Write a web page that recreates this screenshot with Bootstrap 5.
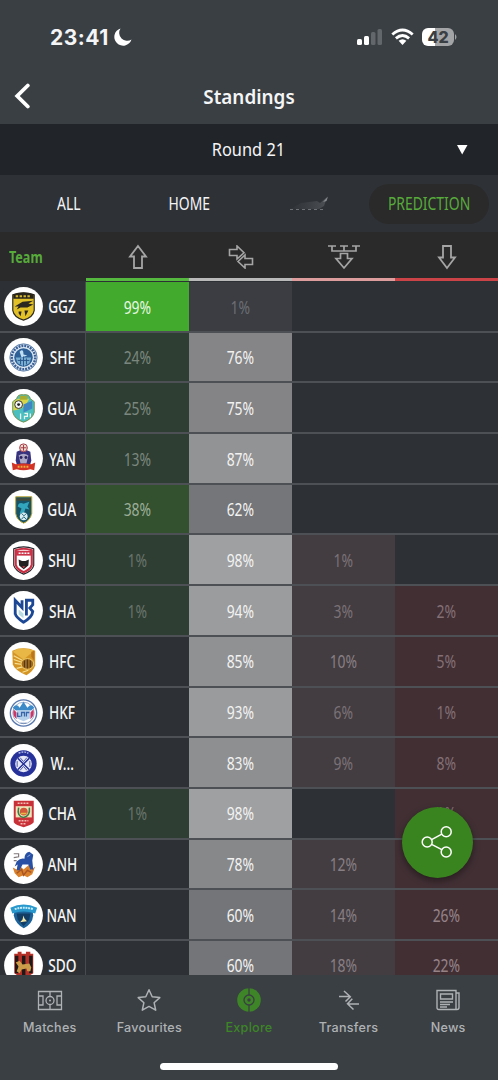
<!DOCTYPE html>
<html lang="en">
<head>
    <meta charset="UTF-8">
    <meta name="viewport" content="width=device-width, initial-scale=1.0">
    <link href="https://cdn.jsdelivr.net/npm/bootstrap@5.3.3/dist/css/bootstrap.min.css" rel="stylesheet" />
    <script defer src="https://cdn.jsdelivr.net/npm/bootstrap@5.3.3/dist/js/bootstrap.bundle.min.js"></script>
    <title>Standings</title>
    <style>
      body {
        height: 1080px;
        background: #3a3f43;
        color: #f4f5f6;
        font-family: "Noto Sans", "Open Sans", sans-serif;
        font-size: 17.6px;
        line-height: 1;
      }
      svg { display: block; flex: none; }
      /* condensed lettering */
      .cond { display: inline-block; transform: scaleX(.79); white-space: nowrap; }

      .status-bar { height: 74px; padding: 0 41px 0 50px; font-family: Inter, sans-serif; }
      .clock { font-size: 21px; font-weight: 750; letter-spacing: .5px; }
      .battery { width: 32px; height: 18px; border-radius: 6px; color: #3a3f43; font-size: 16px; font-weight: 800;
                 background: linear-gradient(90deg, #fff 42%, #a2a4a6 42%); }
      .title-bar { height: 50px; padding-bottom: 6px; }
      .title-bar h1 { font-size: 20.5px; font-weight: 600; transform: scaleX(.92); }
      .round-bar { height: 51px; background: #212429; }
      .round-bar .cond { transform: scaleX(.93); }
      .tabs-bar { height: 57px; background: #2e3136; padding: 0 9px; }
      .tab-item { width: 120px; height: 40px; border-radius: 20px; }
      .tab-on { background: #2a2a2a; color: #57ab3b; }

      .team-col { width: 86px; flex: none; }
      .head-row { height: 49px; background: #2a2a2a; }
      .head-row .team-col { color: #57ab3b; font-weight: 700; font-size: 15.5px; padding: 2px 0 0 9px; }
      .head-row .cond { transform: scaleX(.81); transform-origin: left; }
      .head-cell { border-bottom: 3px solid; color: #a5a5a5; }
      .head-cell svg { margin-top: 4px; }
      .table-area { height: 694px; background: #2d3034; padding-top: 1px; }
      .team-row { height: 50.7px; flex: none; border-bottom: 2px solid #4d5054; }
      .team-row .cond { padding-top: 2px; }
      .team-row .team-col { border-right: 1.4px solid #484b4f; padding-left: 4px; }
      .crest { width: 39px; height: 39px; margin-top: 1px; }
      .team-name { width: 38px; font-weight: 500; font-size: 17.8px; }
      .team-name .cond { transform: scaleX(.77); }

      .share-btn { left: 401.5px; top: 806.5px; width: 71px; height: 71px; background: #3a841f;
                   box-shadow: 0 3px 7px rgba(0, 0, 0, .4); }
      .bottom-nav { height: 105px; background: #3a3f43; color: #afb2b5; font: 500 12.6px/1 Inter, sans-serif; letter-spacing: .25px; }
      .bottom-nav .on { color: #3d8527; }
      .nav-cell { padding-top: 12px; }
      .nav-cell svg { margin-bottom: 9px; }
      .home-bar { left: 160px; top: 1063px; width: 178px; height: 7px; background: #fff; }
    </style>
</head>
<body class="d-flex flex-column overflow-hidden position-relative m-0">
    <header>
      <div class="status-bar d-flex align-items-center">
        <span class="clock">23:41</span>
        <svg class="ms-1" width="20" height="20" viewBox="0 0 20 20"><path d="M7.500 1.500A8.800 8.800 0 1 0 18.500 12.600A8 8 0 0 1 7.500 1.500Z" fill="#fff"/></svg>
        <svg class="ms-auto" width="26" height="18" viewBox="0 0 26 18">
          <rect x="0" y="11" width="5" height="6" rx="1.5" fill="#fff"/><rect x="7" y="8" width="5" height="9" rx="1.5" fill="#fff"/>
          <rect x="14" y="4" width="4.5" height="13" rx="1.5" fill="#62676c"/><rect x="20.5" y="1" width="4.5" height="16" rx="1.5" fill="#62676c"/>
        </svg>
        <svg style="margin-left:8px" width="23" height="18" viewBox="0 0 23 18" fill="none" stroke="#fff" stroke-width="2.8">
          <path d="M1.3 6.5Q11.5-2.5 21.7 6.5M4.9 10.4Q11.5 4.5 18.1 10.4"/><path d="M7.6 12.8Q11.5 9.7 15.4 12.8L11.5 17Z" fill="#fff" stroke="none"/>
        </svg>
        <span class="battery d-flex align-items-center justify-content-center" style="margin-left:8px">42</span>
        <svg width="3" height="6" viewBox="0 0 3 6"><path d="M1 0Q4 3 1 6Z" fill="#a2a4a6"/></svg>
      </div>
      <div class="title-bar d-flex align-items-center">
        <svg style="margin-left:14px" width="17" height="26" viewBox="0 0 17 26"><path d="M13.800 2.500L3.200 13L13.800 23.500" fill="none" stroke="#fff" stroke-width="3.800" stroke-linecap="round"/></svg>
        <h1 class="flex-fill text-center mb-0" style="margin-right:31px">Standings</h1>
      </div>
    </header>

    <div class="round-bar d-flex align-items-center">
      <span class="flex-fill text-center" style="padding-left:40px"><span class="cond">Round 21</span></span>
      <svg style="margin-right:30px" width="11" height="10" viewBox="0 0 11 10"><path d="M0 0H10.5L5.2 9.5Z" fill="#fff"/></svg>
    </div>

    <div class="tabs-bar d-flex align-items-center">
      <div class="tab-item d-flex align-items-center justify-content-center"><span class="cond">ALL</span></div>
      <div class="tab-item d-flex align-items-center justify-content-center"><span class="cond">HOME</span></div>
      <div class="tab-item d-flex align-items-center justify-content-center">
        <svg width="40" height="16" viewBox="0 0 40 16">
          <defs><linearGradient id="fade" x1="0" x2="1"><stop offset="0" stop-color="#42454a" stop-opacity=".2"/><stop offset="1" stop-color="#5c5f64"/></linearGradient></defs>
          <path d="M2 13L12 7L20 6L28 5L31 7L38 1L35 10L30 13Z" fill="url(#fade)" opacity=".7"/>
          <path d="M1 13.500H37" stroke="#6f7276" stroke-width="1.200" stroke-dasharray="3 3"/>
          <path d="M34 6L39 .500L37.500 5Z" fill="#8b8e91"/>
        </svg>
      </div>
      <div class="tab-item tab-on d-flex align-items-center justify-content-center"><span class="cond">PREDICTION</span></div>
    </div>

    <div class="head-row d-flex">
      <div class="team-col d-flex align-items-center"><span class="cond">Team</span></div>
      <div class="head-cell col d-flex align-items-center justify-content-center" style="border-color:#55b83f">
        <svg width="20" height="26" viewBox="0 0 20 26" fill="none" stroke="currentColor" stroke-width="1.8"><path d="M10 2L18 12.5H14V24H6V12.5H2Z"/></svg>
      </div>
      <div class="head-cell col d-flex align-items-center justify-content-center" style="border-color:#b9b9b9">
        <svg width="26" height="24" viewBox="0 0 26 24" fill="none" stroke="currentColor" stroke-width="1.6"><path d="M1.5 4.5H9V1L16 7.8L9 14V10.5H1.5Z"/><path d="M24.500 13.500H17V10L10 16.500L17 23V19.500H24.500Z" fill="#2a2a2a"/></svg>
      </div>
      <div class="head-cell col d-flex align-items-center justify-content-center" style="border-color:#dc9d9c">
        <svg width="32" height="26" viewBox="0 0 32 26" fill="none" stroke="currentColor" stroke-width="1.7"><path d="M0 2H8M12 2H20M24 2H32M4 2V7H28V2M16 2V7M12.500 9.500H19.500V14.500H24L16 24L8 14.500H12.500Z"/></svg>
      </div>
      <div class="head-cell col d-flex align-items-center justify-content-center" style="border-color:#cb4347">
        <svg width="20" height="26" viewBox="0 0 20 26" fill="none" stroke="currentColor" stroke-width="1.8"><path d="M10 24L18 13.500H14V2H6V13.500H2Z"/></svg>
      </div>
    </div>

    <main class="table-area overflow-hidden d-flex flex-column" id="table"></main>

    <nav class="bottom-nav d-flex text-center">
      <div class="nav-cell col d-flex flex-column align-items-center">
        <svg width="26" height="26" viewBox="0 0 26 26" fill="none" stroke="currentColor" stroke-width="1.3"><path d="M1.500 4.500H24.500V22.500H1.500ZM13 4.500V9.500M13 17.500V22.500M1.500 9H6V18H1.500M24.500 9H20V18H24.500"/><circle cx="13" cy="13.500" r="4"/><circle cx="13" cy="13.500" r="1" fill="currentColor" stroke="none"/></svg>
        Matches
      </div>
      <div class="nav-cell col d-flex flex-column align-items-center">
        <svg width="26" height="26" viewBox="0 0 26 26" fill="none" stroke="currentColor" stroke-width="1.5"><path d="M13 2.800L16.200 9.800L23.800 10.600L18.100 15.700L19.700 23.200L13 19.400L6.300 23.200L7.900 15.700L2.200 10.600L9.800 9.800Z" stroke-linejoin="round"/></svg>
        Favourites
      </div>
      <div class="nav-cell on col d-flex flex-column align-items-center">
        <svg width="26" height="26" viewBox="0 0 26 26"><circle cx="13" cy="13" r="11.800" fill="currentColor"/><g fill="none" stroke="#3a3f43" stroke-width="1.300"><path d="M13 1V8M13 18V25"/><circle cx="13" cy="13" r="5"/></g><circle cx="13" cy="13" r="1.700" fill="#3a3f43"/></svg>
        Explore
      </div>
      <div class="nav-cell col d-flex flex-column align-items-center">
        <svg width="26" height="26" viewBox="0 0 26 26" fill="none" stroke="currentColor" stroke-width="1.500"><path d="M3 9.500H14M8 4L14.300 9.800L9.500 14.500M23 17H12M17.500 22.500L11.500 16.700L16.300 11.800"/></svg>
        Transfers
      </div>
      <div class="nav-cell col d-flex flex-column align-items-center">
        <svg width="26" height="26" viewBox="0 0 26 26" fill="none" stroke="currentColor" stroke-width="1.400"><path d="M2 3.500H21V22.500H4Q2 22.500 2 20.500ZM21 6H24V20.500Q24 22.500 22 22.500H20M5.500 7H17.500V12H5.500ZM5 15H18M5 17.500H15M5 20H12"/></svg>
        News
      </div>
    </nav>
    <div class="home-bar position-absolute rounded-pill"></div>

    <button type="button" class="share-btn position-absolute rounded-circle border-0 d-flex align-items-center justify-content-center p-0" aria-label="Share">
      <svg width="32" height="32" viewBox="0 0 32 32" fill="none" stroke="#fff" stroke-width="1.500"><circle cx="6.200" cy="16" r="5"/><circle cx="25.200" cy="5.800" r="5"/><circle cx="25.200" cy="26" r="5"/><path d="M10.600 13.600L20.800 8.200M10.600 18.400L20.800 23.600"/></svg>
    </button>

    <script>
      // club badges, drawn on a 40x40 white disc
      const crests = {
        ggz: `<path d="M9 8Q20 4 31 8V24Q30 31 20 34Q10 31 9 24Z" fill="#e2c128" stroke="#2d2920" stroke-width="1.200"/>
              <path d="M9.500 7.500Q20 4 30.500 7.500V12H9.500Z" fill="#28241c"/><path d="M12 9.500H28" stroke="#d5b92e" stroke-width="2" stroke-dasharray="2.500 1.500"/>
              <path d="M11 20L19 15L30 14L25 17L30 18L24 21H17L13 23L15 20ZM15 25H18L17 30L15 27ZM21 24L25 24L22 30Z" fill="#2b2720"/>`,
        she: `<circle cx="20" cy="20" r="14" fill="#dce8f2" stroke="#5d7eaa"/><circle cx="20" cy="20" r="12" fill="none" stroke="#3b5f94" stroke-width="2.500" stroke-dasharray="2 1"/>
              <circle cx="20" cy="20" r="9.500" fill="#2d6097"/><path d="M12 20H28L26 26L20 29L14 26Z" fill="#79afd2"/>
              <path d="M16 14Q20 10 20 17L24 18L18 20Z" fill="#bfe0f2"/><path d="M14 23H26M17 21V27M23 21V27M20 19V29" stroke="#28558c"/>`,
        gua: `<path d="M13 10Q14 5 20 6Q26 5 27 10L31 13V24Q29 31 20 34Q11 31 9 24V13Z" fill="#4bbfc0" stroke="#708f45"/>
              <path d="M9.500 13L14 10L26 10L22 17Q16 22 9.500 22Z" fill="#d9d548"/><path d="M16 7H24V11H16Z" fill="#a8ad32"/>
              <circle cx="15" cy="16" r="4" fill="#f4f4f4" stroke="#333"/><circle cx="15" cy="16" r="1.500" fill="#222"/><path d="M20 16L29 12V20L20 24Z" fill="#3f86c2"/>
              <path d="M17 25V31M21 25H24V28H21V31M27 25V29" stroke="#ecf7ef" stroke-width="1.300" fill="none"/>`,
        yan: `<path d="M13 13Q20 9 27 13L28 22Q27 29 20 31Q13 29 12 22Z" fill="#38337e"/><circle cx="20" cy="9" r="4" fill="#f0d9cf" stroke="#a13b45"/><path d="M20 6V12M17 9H23" stroke="#a13b45"/>
              <path d="M15 17Q20 13 25 17L23 25H17Z" fill="#aaa7c5"/><circle cx="17.500" cy="19" r="1.500" fill="#28235d"/><circle cx="22.500" cy="19" r="1.500" fill="#28235d"/>
              <path d="M8 24L12 26Q20 24 28 26L32 24L31 32L27 31Q20 33 13 31L9 32Z" fill="#d33324"/><path d="M14 28.500H26" stroke="#edab3d" stroke-width="2" stroke-dasharray="2 1"/>`,
        gz: `<path d="M12 7H28.500V24Q27 31 20.200 34Q13 31 12 24Z" fill="#175368" stroke="#c2a52c"/><path d="M13 8.500H27.500V11H13Z" fill="#434a3b"/>
              <path d="M14 17Q15 12 20 14L26 12L24 17L26 20L22 19L20 25L16 24L18 19Z" fill="#31a6bd"/><circle cx="20.200" cy="27" r="4" fill="#d8edf1"/><path d="M18 24L20.500 26.500L23 24M18 30L20.200 27.500L23 30" stroke="#24647a" fill="none"/>`,
        shu: `<path d="M10 8Q20 4 30.500 8V25Q29 31 20.200 34Q12 31 10 25Z" fill="#fff" stroke="#252329" stroke-width="1.200"/><path d="M12 9.500Q20 6.500 28.500 9.500V24.500Q27 29.500 20.200 32Q13.500 29.500 12 24.500Z" fill="#fff" stroke="#c92f43" stroke-width="2.200"/>
              <path d="M12 10H29V15H12Z" fill="#cc3349"/><path d="M15 12.500H26" stroke="#fff" stroke-width="1.600" stroke-dasharray="2 1"/><path d="M15 19L18.500 20.500H22L25.500 19L25 25L20.200 29L15.500 25Z" fill="#222"/><path d="M18.800 26L20.200 28L21.700 26Z" fill="#e04151"/>`,
        sha: `<path d="M11.500 24V9.500L18.500 17V9.500M11.500 23Q12 27 20 32Q29 27 29.500 21L26.500 17.500L29.500 14V9.500H23V25" fill="none" stroke="#1c4794" stroke-width="2.900"/>
              <path d="M15 19L20 23V28L15 24Z" fill="#b8dce2"/>`,
        hfc: `<path d="M8.500 9Q20 4 32 9V24Q30 30 23 34Q11 29 9 23Z" fill="#d59525"/><path d="M9 10L20 18L31 9Q24 6 14 7Z" fill="#e8b745"/><path d="M10 14L21 20M10 18L19 21M11 22L18 23M13 27L21 25M19 31L25 29" stroke="#f5df91" stroke-width="1.200"/>
              <ellipse cx="24" cy="22.500" rx="6.500" ry="5.500" fill="#9e681c" stroke="#f1cd6b"/><path d="M21 19V26M24 18V27M27 19V26" stroke="#4e371d"/><path d="M28 10L31 9V19L28 15Z" fill="#bb751b"/>`,
        hkf: `<circle cx="20" cy="20.500" r="13.500" fill="#fff" stroke="#5878ad" stroke-width="1.400"/><circle cx="20" cy="20.500" r="11" fill="none" stroke="#98aed0"/>
              <path d="M9 15Q13 10 16 15L20 9L24 15Q28 10 31 15L28 18H12Z" fill="#3c8bc8"/><path d="M10 17L13 20V27Q8 23 10 17ZM30 17L27 20V27Q32 23 30 17Z" fill="#ce3664"/><path d="M13 18H27V26L20 29L13 26Z" fill="#b5d0ea"/><path d="M14 20V24H17M18 24V20H21V24M23 24V20H26" stroke="#3665a9" fill="none" stroke-width="1.300"/><path d="M17 31H23" stroke="#7088b2"/>`,
        w: `<circle cx="20" cy="20" r="13.500" fill="#26329a"/><path d="M15 9.500Q20 7 25 9.500" stroke="#aab1df" fill="none" stroke-width="1.500" stroke-dasharray="2 1"/><circle cx="20" cy="20.500" r="8.500" fill="#e7e9f7"/>
              <path d="M14 14.500L26 26.500M26 14.500L14 26.500" stroke="#26329a" stroke-width="1.500"/><path d="M16.500 14L20 18L23.500 14M16.500 27L20 23L23.500 27M13.500 17.500V23.500M26.500 17.500V23.500" fill="none" stroke="#4b559f"/>`,
        cha: `<path d="M10 7H30.500V29Q28 32 20.200 34Q12 32 10 29Z" fill="#c93138"/><path d="M12 12.500H28.500V24H12Z" fill="#efe4b9"/><path d="M14 9.500H26M15 27.500H25M17 30.500H23" stroke="#f3bdb3" stroke-width="1.600" stroke-dasharray="2 1"/>
              <path d="M15 14Q13 23 20 24Q27 23 26 14" fill="none" stroke="#3e7b48" stroke-width="1.600"/><circle cx="20.300" cy="18" r="4" fill="#d2583a"/><path d="M17.500 20H23" stroke="#e4bc43" stroke-width="1.500"/>`,
        anh: `<path d="M9 23L13 25L15 20L20 25L26 20L28 25L32 22L29 30L24 33L20 31L15 33L11 29Z" fill="#d9812d"/><path d="M13 29L18 25L20 31L24 26L28 28" stroke="#a95424" fill="none" stroke-width="1.500"/>
              <path d="M13 17Q17 13 21 14Q21 8 26 7L30 10L29 16L30 25H27L25 20L19 20L16 26H13L14 20L11 22Z" fill="#2851a5"/><path d="M10 9H15V12L10 13M10 16H13" stroke="#807779" fill="none" stroke-width="1.200"/><path d="M24 12L27 10" stroke="#93aedc"/>`,
        nan: `<path d="M11 13H29L30 20Q29 29 20.300 33Q12 29 10 20Z" fill="#1c6298"/><path d="M13 18H27L26 24L20 31L14 24Z" fill="#123c64"/><path d="M6.500 12Q20 5.500 34 12L32 18Q20 14 8.500 18Z" fill="#2898cd"/>
              <path d="M11 13.500Q20 10.500 30 13.500" stroke="#c6edfa" fill="none" stroke-width="2" stroke-dasharray="2 .8"/><path d="M20 20L21 23L23.500 26L16.500 27L19 24Z" fill="#eee5a8"/>`,
        sdo: `<path d="M10.500 8H14V6H18V8H22.500V6H27V8H30V28L20 34L10.500 28Z" fill="#b63027"/><path d="M13 10V28M20.200 10V31M27.500 10V28" stroke="#1d1919" stroke-width="3.500"/><path d="M12 17L16 15L19 19L26 18L28 22L27 26H24L23 23L18 24L16 28L13 26L15 21Z" fill="#cd9c4a"/>`
      };

      // chance in %, background, text colour; null is an empty cell
      const up = v => [v, "#2f3e33", v > 9 ? "#7b877e" : "#68746b"];
      const mid = (v, bg) => [v, bg, "#f2f2f2"];
      const off = v => [v, "#433d41", v > 9 ? "#887f84" : "#7b7277"];
      const down = v => [v, "#412f34", v > 19 ? "#968388" : "#846f75"];

      const teams = [
        ["ggz", "GGZ", [99, "#42aa2c", "#e6f7e0"], [1, "#3b3d42", "#6c6e73"], null, null],
        ["she", "SHE", up(24), mid(76, "#858587"), null, null],
        ["gua", "GUA", up(25), mid(75, "#848486"), null, null],
        ["yan", "YAN", up(13), mid(87, "#929394"), null, null],
        ["gz", "GUA", [38, "#33502f", "#9cae98"], mid(62, "#757679"), null, null],
        ["shu", "SHU", up(1), mid(98, "#9fa0a1"), off(1), null],
        ["sha", "SHA", up(1), mid(94, "#9b9c9d"), off(3), down(2)],
        ["hfc", "HFC", null, mid(85, "#909192"), off(10), down(5)],
        ["hkf", "HKF", null, mid(93, "#9a9b9c"), off(6), down(1)],
        ["w", "W...", null, mid(83, "#8e8f90"), off(9), down(8)],
        ["cha", "CHA", up(1), mid(98, "#9fa0a1"), null, down(1)],
        ["anh", "ANH", null, mid(78, "#87888a"), off(12), down(10)],
        ["nan", "NAN", null, mid(60, "#747578"), off(14), down(26)],
        ["sdo", "SDO", null, mid(60, "#747578"), off(18), down(22)]
      ];

      let output = "";
      teams.forEach(([crest, name, ...cells]) => {
        output += `
          <div class="team-row d-flex">
            <div class="team-col d-flex align-items-center">
              <svg class="crest" viewBox="0 0 40 40"><circle cx="20" cy="20" r="19.900" fill="#fff"/>${crests[crest]}</svg>
              <div class="team-name d-flex justify-content-center"><span class="cond">${name}</span></div>
            </div>
            ${cells.map(c => c
              ? `<div class="col d-flex align-items-center justify-content-center" style="background:${c[1]};color:${c[2]}"><span class="cond">${c[0]}%</span></div>`
              : `<div class="col"></div>`).join("")}
          </div>`;
      });
      document.querySelector("#table").innerHTML = output;
    </script>
</body>
</html>
